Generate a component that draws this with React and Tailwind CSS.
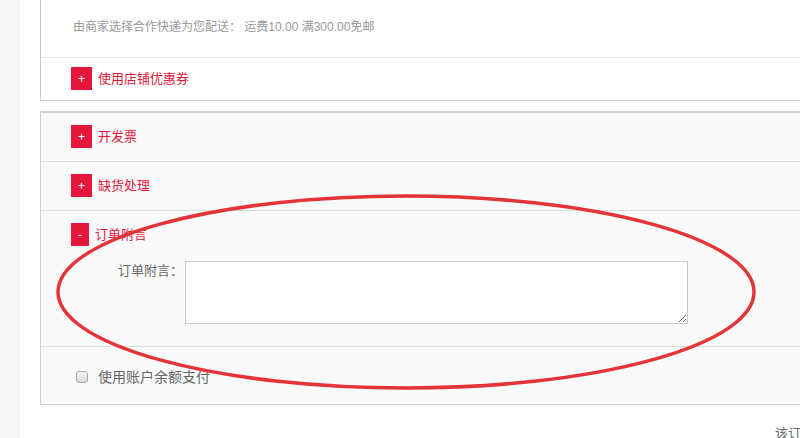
import React from 'react';

const font = { fontFamily: '"Liberation Sans", "Noto Sans CJK SC", sans-serif' };

const Toggle = ({ open }) => (
  <span className="inline-flex items-center justify-center h-[23px] px-[7px] bg-[#e4163a] text-white text-[12px] leading-none">
    {open ? '-' : '+'}
  </span>
);

const SectionHead = ({ title, open }) => (
  <div className="flex items-center gap-[6px]">
    <Toggle open={open} />
    <span className="text-[13px] leading-[23px] text-[#e4163a]">{title}</span>
  </div>
);

export default function App() {
  return (
    <div className="relative w-[800px] h-[438px] overflow-hidden bg-white flex" style={font}>
      {/* left gray strip */}
      <div className="w-[20px] shrink-0 bg-[#f5f5f5]" />

      <div className="pl-[20px] shrink-0 w-[800px]">
        {/* ====== Shipping + coupon box ====== */}
        <div className="w-[780px] border-l border-b border-[#cccccc] bg-white">
          <div className="pl-[32px] pt-[19px] pb-[22px] text-[12px] leading-[16px] text-[#999999]">
            由商家选择合作快递为您配送： 运费10.00 满300.00免邮
          </div>
          <div className="border-t border-dotted border-[#d9d9d9] pl-[30px] pt-[9px] pb-[10px]">
            <SectionHead title="使用店铺优惠券" />
          </div>
        </div>

        {/* ====== Options box ====== */}
        <div className="mt-[10px] w-[780px] border-l border-t-2 border-b border-[#cfcfcf] bg-[#fafafa]">
          <div className="pl-[30px] pt-[12px] pb-[13px] border-b border-[#dddddd]">
            <SectionHead title="开发票" />
          </div>
          <div className="pl-[30px] pt-[12px] pb-[13px] border-b border-[#dddddd]">
            <SectionHead title="缺货处理" />
          </div>
          <div className="pl-[30px] pt-[12px] pb-[22px] border-b border-[#dddddd]">
            <SectionHead title="订单附言" open />
            <div className="flex items-start mt-[15px]">
              <label className="w-[114px] pl-[47px] text-[13px] leading-[20px] text-[#666666] whitespace-nowrap">订单附言：</label>
              <textarea className="w-[503px] h-[63px] border border-[#cccccc] bg-white outline-none" />
            </div>
          </div>
          <div className="h-[57px] pl-[35px] pt-[3px] flex items-center">
            <span className="w-[12px] h-[12px] rounded-[3px] border border-[#a9a9a9] bg-gradient-to-b from-[#f4f4f4] to-[#dadada]" />
            <span className="ml-[10px] text-[14px] leading-[20px] text-[#666666]">使用账户余额支付</span>
          </div>
        </div>

        <div className="mt-[20px] ml-[735px] whitespace-nowrap text-[13px] leading-[18px] text-[#666666]">
          该订单应付总额
        </div>
      </div>

      {/* red annotation ellipse */}
      <svg className="absolute inset-0 pointer-events-none" width="800" height="438" viewBox="0 0 800 438">
        <ellipse cx="406" cy="292" rx="348" ry="96" fill="none" stroke="#e5333a" strokeWidth="3.5" />
      </svg>
    </div>
  );
}
